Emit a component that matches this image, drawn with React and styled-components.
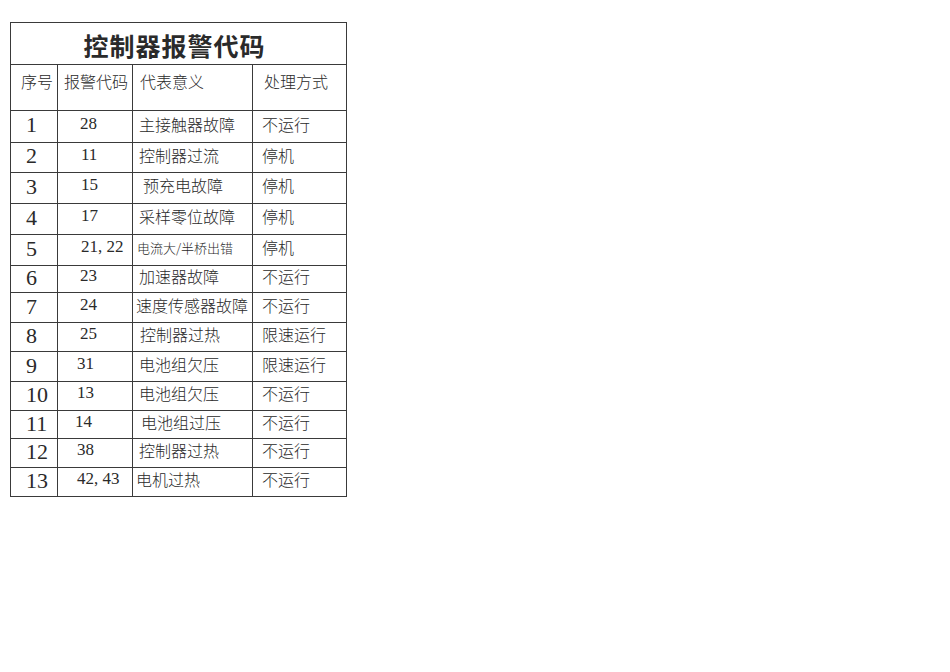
import styled, { createGlobalStyle } from "styled-components";

const GlobalStyle = createGlobalStyle`
  body {
    margin: 0;
    background: #fff;
  }
`;

const Page = styled.div`
  padding: 22px 0 0 10px;
  font-family: "Liberation Serif", "Noto Sans CJK SC", serif;
  color: #2a2a2a;
`;

const Table = styled.table`
  border-collapse: collapse;
  table-layout: fixed;
  width: 336px;

  td,
  th {
    border: 1px solid #3a3a3a;
    padding: 0;
    white-space: nowrap;
    overflow: visible;
    vertical-align: middle;
    line-height: 1.1;
  }
`;

const TitleCell = styled.th`
  height: 37px;
  font-family: "Noto Sans CJK SC", sans-serif;
  font-size: 25px;
  font-weight: 700;
  text-align: center;
  padding-top: 4px !important;
  padding-right: 8px !important;
  letter-spacing: 1px;
`;

const HeadCell = styled.th`
  height: 33px;
  font-family: "Noto Sans CJK SC", sans-serif;
  font-size: 16px;
  font-weight: 300;
  text-align: left;
  padding-left: ${(p) => p.$indent}px !important;
  padding-bottom: 12px !important;
`;

const Row = styled.tr`
  height: ${(p) => p.$h}px;
`;

const NumCell = styled.td`
  font-size: 22px;
  padding-left: 15px !important;
  padding-bottom: 2px !important;
`;

const CodeCell = styled.td`
  font-size: 17px;
  padding-left: ${(p) => p.$indent}px !important;
  padding-bottom: 5px !important;
`;

const MeaningCell = styled.td`
  font-family: "Noto Sans CJK SC", sans-serif;
  font-weight: 300;
  font-size: ${(p) => (p.$small ? 13 : 16)}px;
  padding-left: ${(p) => p.$indent}px !important;
  padding-bottom: 4px !important;
`;

const ActionCell = styled.td`
  font-family: "Noto Sans CJK SC", sans-serif;
  font-weight: 300;
  font-size: 16px;
  padding-left: 9px !important;
  padding-bottom: 4px !important;
`;

const rows = [
  { n: 1, code: "28", ci: 22, meaning: "主接触器故障", mi: 6, action: "不运行", h: 32 },
  { n: 2, code: "11", ci: 23, meaning: "控制器过流", mi: 6, action: "停机", h: 30 },
  { n: 3, code: "15", ci: 23, meaning: "预充电故障", mi: 10, action: "停机", h: 31 },
  { n: 4, code: "17", ci: 23, meaning: "采样零位故障", mi: 6, action: "停机", h: 31 },
  { n: 5, code: "21, 22", ci: 23, meaning: "电流大/半桥出错", mi: 4, small: true, action: "停机", h: 31 },
  { n: 6, code: "23", ci: 22, meaning: "加速器故障", mi: 6, action: "不运行", h: 27 },
  { n: 7, code: "24", ci: 22, meaning: "速度传感器故障", mi: 3, action: "不运行", h: 30 },
  { n: 8, code: "25", ci: 22, meaning: "控制器过热", mi: 7, action: "限速运行", h: 29 },
  { n: 9, code: "31", ci: 19, meaning: "电池组欠压", mi: 6, action: "限速运行", h: 30 },
  { n: 10, code: "13", ci: 19, meaning: "电池组欠压", mi: 6, action: "不运行", h: 29 },
  { n: 11, code: "14", ci: 17, meaning: "电池组过压", mi: 8, action: "不运行", h: 28 },
  { n: 12, code: "38", ci: 19, meaning: "控制器过热", mi: 6, action: "不运行", h: 29 },
  { n: 13, code: "42, 43", ci: 19, meaning: "电机过热", mi: 3, action: "不运行", h: 29 },
];

export default function App() {
  return (
    <Page>
      <GlobalStyle />
      <Table>
        <colgroup>
          <col style={{ width: 47 }} />
          <col style={{ width: 75 }} />
          <col style={{ width: 120 }} />
          <col style={{ width: 94 }} />
        </colgroup>
        <thead>
          <tr>
            <TitleCell colSpan={4}>控制器报警代码</TitleCell>
          </tr>
          <tr>
            <HeadCell $indent={10}>序号</HeadCell>
            <HeadCell $indent={6}>报警代码</HeadCell>
            <HeadCell $indent={7}>代表意义</HeadCell>
            <HeadCell $indent={11}>处理方式</HeadCell>
          </tr>
        </thead>
        <tbody>
          {rows.map((r) => (
            <Row key={r.n} $h={r.h}>
              <NumCell>{r.n}</NumCell>
              <CodeCell $indent={r.ci}>{r.code}</CodeCell>
              <MeaningCell $indent={r.mi} $small={r.small}>
                {r.meaning}
              </MeaningCell>
              <ActionCell>{r.action}</ActionCell>
            </Row>
          ))}
        </tbody>
      </Table>
    </Page>
  );
}
